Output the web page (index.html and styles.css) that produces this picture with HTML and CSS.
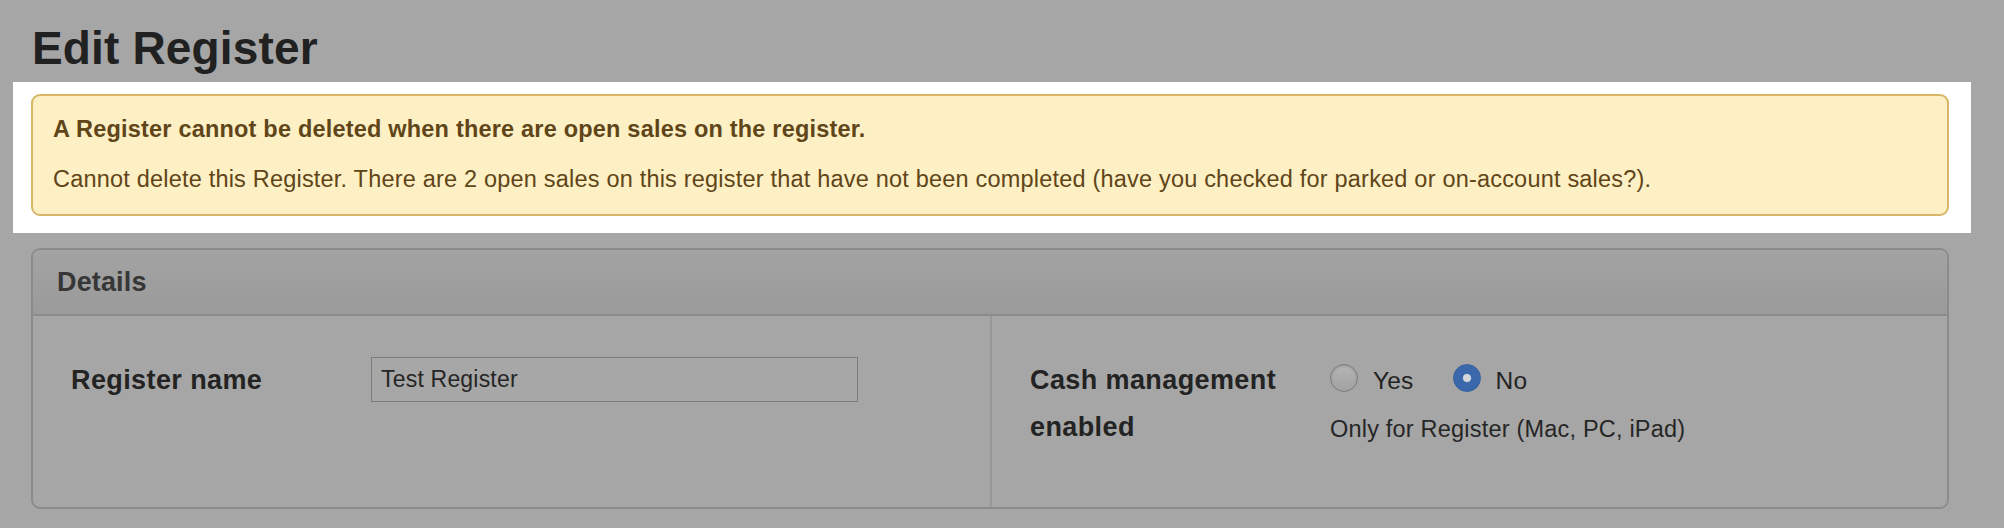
FILE: index.html
```html
<!DOCTYPE html>
<html lang="en">
<head>
<meta charset="utf-8">
<title>Edit Register</title>
<link rel="stylesheet" href="styles.css">
</head>
<body>
<div class="page">
  <h1 class="title">Edit Register</h1>

  <div class="spotlight">
    <div class="alert">
      <p class="alert-title">A Register cannot be deleted when there are open sales on the register.</p>
      <p class="alert-text">Cannot delete this Register. There are 2 open sales on this register that have not been completed (have you checked for parked or on-account sales?).</p>
    </div>
  </div>

  <section class="panel">
    <header class="panel-head">Details</header>
    <div class="panel-body">
      <div class="col">
        <div class="field">
          <label class="label" for="reg-name">Register name</label>
          <div class="control">
            <input class="text-input" id="reg-name" type="text" value="Test Register">
          </div>
        </div>
      </div>
      <div class="col col-right">
        <div class="field">
          <div class="label">Cash management enabled</div>
          <div class="control">
            <div class="radio-row">
              <label class="radio-option"><input class="radio" type="radio" name="cash"> <span>Yes</span></label>
              <label class="radio-option"><input class="radio" type="radio" name="cash" checked> <span>No</span></label>
            </div>
            <div class="help">Only for Register (Mac, PC, iPad)</div>
          </div>
        </div>
      </div>
    </div>
  </section>
</div>
</body>
</html>
```

FILE: styles.css
```css
html, body {
  margin: 0;
  padding: 0;
  background: #a6a6a6;
}

body {
  font-family: "Liberation Sans", Arial, Helvetica, sans-serif;
  color: #232323;
  width: 2004px;
  height: 528px;
  overflow: hidden;
}

.page {
  padding-left: 13px;
}

.title {
  margin: 25px 0 11px 19px;
  font-size: 46px;
  line-height: 46px;
  font-weight: bold;
  letter-spacing: 0.15px;
  color: #212121;
}

.spotlight {
  width: 1918px;
  background: #ffffff;
  padding: 12px 22px 17px 18px;
}

.alert {
  box-sizing: border-box;
  width: 1918px;
  background: #fdf0c4;
  border: 2px solid #d7b667;
  border-radius: 9px;
  padding: 18px 20px 20px 20px;
  color: #604519;
  font-size: 23.5px;
  line-height: 30px;
}

.alert p {
  margin: 0;
}

.alert-title {
  font-weight: bold;
  letter-spacing: 0.2px;
}

.alert-text {
  margin-top: 20px !important;
  letter-spacing: 0.2px;
}

.panel {
  box-sizing: border-box;
  width: 1918px;
  margin: 15px 0 0 18px;
  border: 2px solid #8b8b8b;
  border-radius: 9px;
  overflow: hidden;
}

.panel-head {
  padding: 1px 0 0 24px;
  line-height: 63px;
  font-size: 27px;
  font-weight: bold;
  letter-spacing: 0.15px;
  color: #363636;
  background: linear-gradient(#a3a3a3, #9a9a9a);
  border-bottom: 2px solid #8c8c8c;
}

.panel-body {
  display: grid;
  grid-template-columns: 1fr 1fr;
}

.col {
  padding: 41px 0 54px 38px;
}

.col-right {
  border-left: 2px solid #979797;
}

.field {
  display: flex;
  align-items: flex-start;
}

.label {
  flex: 0 0 300px;
  width: 300px;
  font-size: 27px;
  line-height: 47px;
  font-weight: bold;
  letter-spacing: 0.4px;
  color: #232323;
}

.control {
  display: flex;
  flex-direction: column;
}

.text-input {
  box-sizing: border-box;
  width: 487px;
  height: 45px;
  margin: 0;
  padding: 0 9px;
  border: 1px solid #7b7b7b;
  background: #a7a7a7;
  font-family: "Liberation Sans", Arial, sans-serif;
  font-size: 23px;
  letter-spacing: 0.2px;
  color: #262626;
  outline: none;
}

.radio-row {
  display: flex;
  align-items: center;
  height: 47px;
  font-size: 24.5px;
  letter-spacing: 0.2px;
  color: #232323;
}

.radio-option {
  display: flex;
  align-items: center;
  gap: 15px;
  margin-right: 39px;
}

.radio {
  appearance: none;
  -webkit-appearance: none;
  box-sizing: border-box;
  width: 28px;
  height: 28px;
  margin: 0 0 5px 0;
  border-radius: 50%;
  border: 1px solid #7c7c7c;
  background: linear-gradient(#b4b4b4, #a2a2a2);
  box-shadow: inset 0 1px 2px rgba(0, 0, 0, 0.18);
}

.radio:checked {
  border-color: #34609f;
  background: radial-gradient(circle, #d3d6db 0 3.6px, #3a68ab 4.6px);
  box-shadow: none;
}

.help {
  margin-top: 2px;
  font-size: 23.5px;
  line-height: 47px;
  letter-spacing: 0.2px;
  color: #262626;
}
```
